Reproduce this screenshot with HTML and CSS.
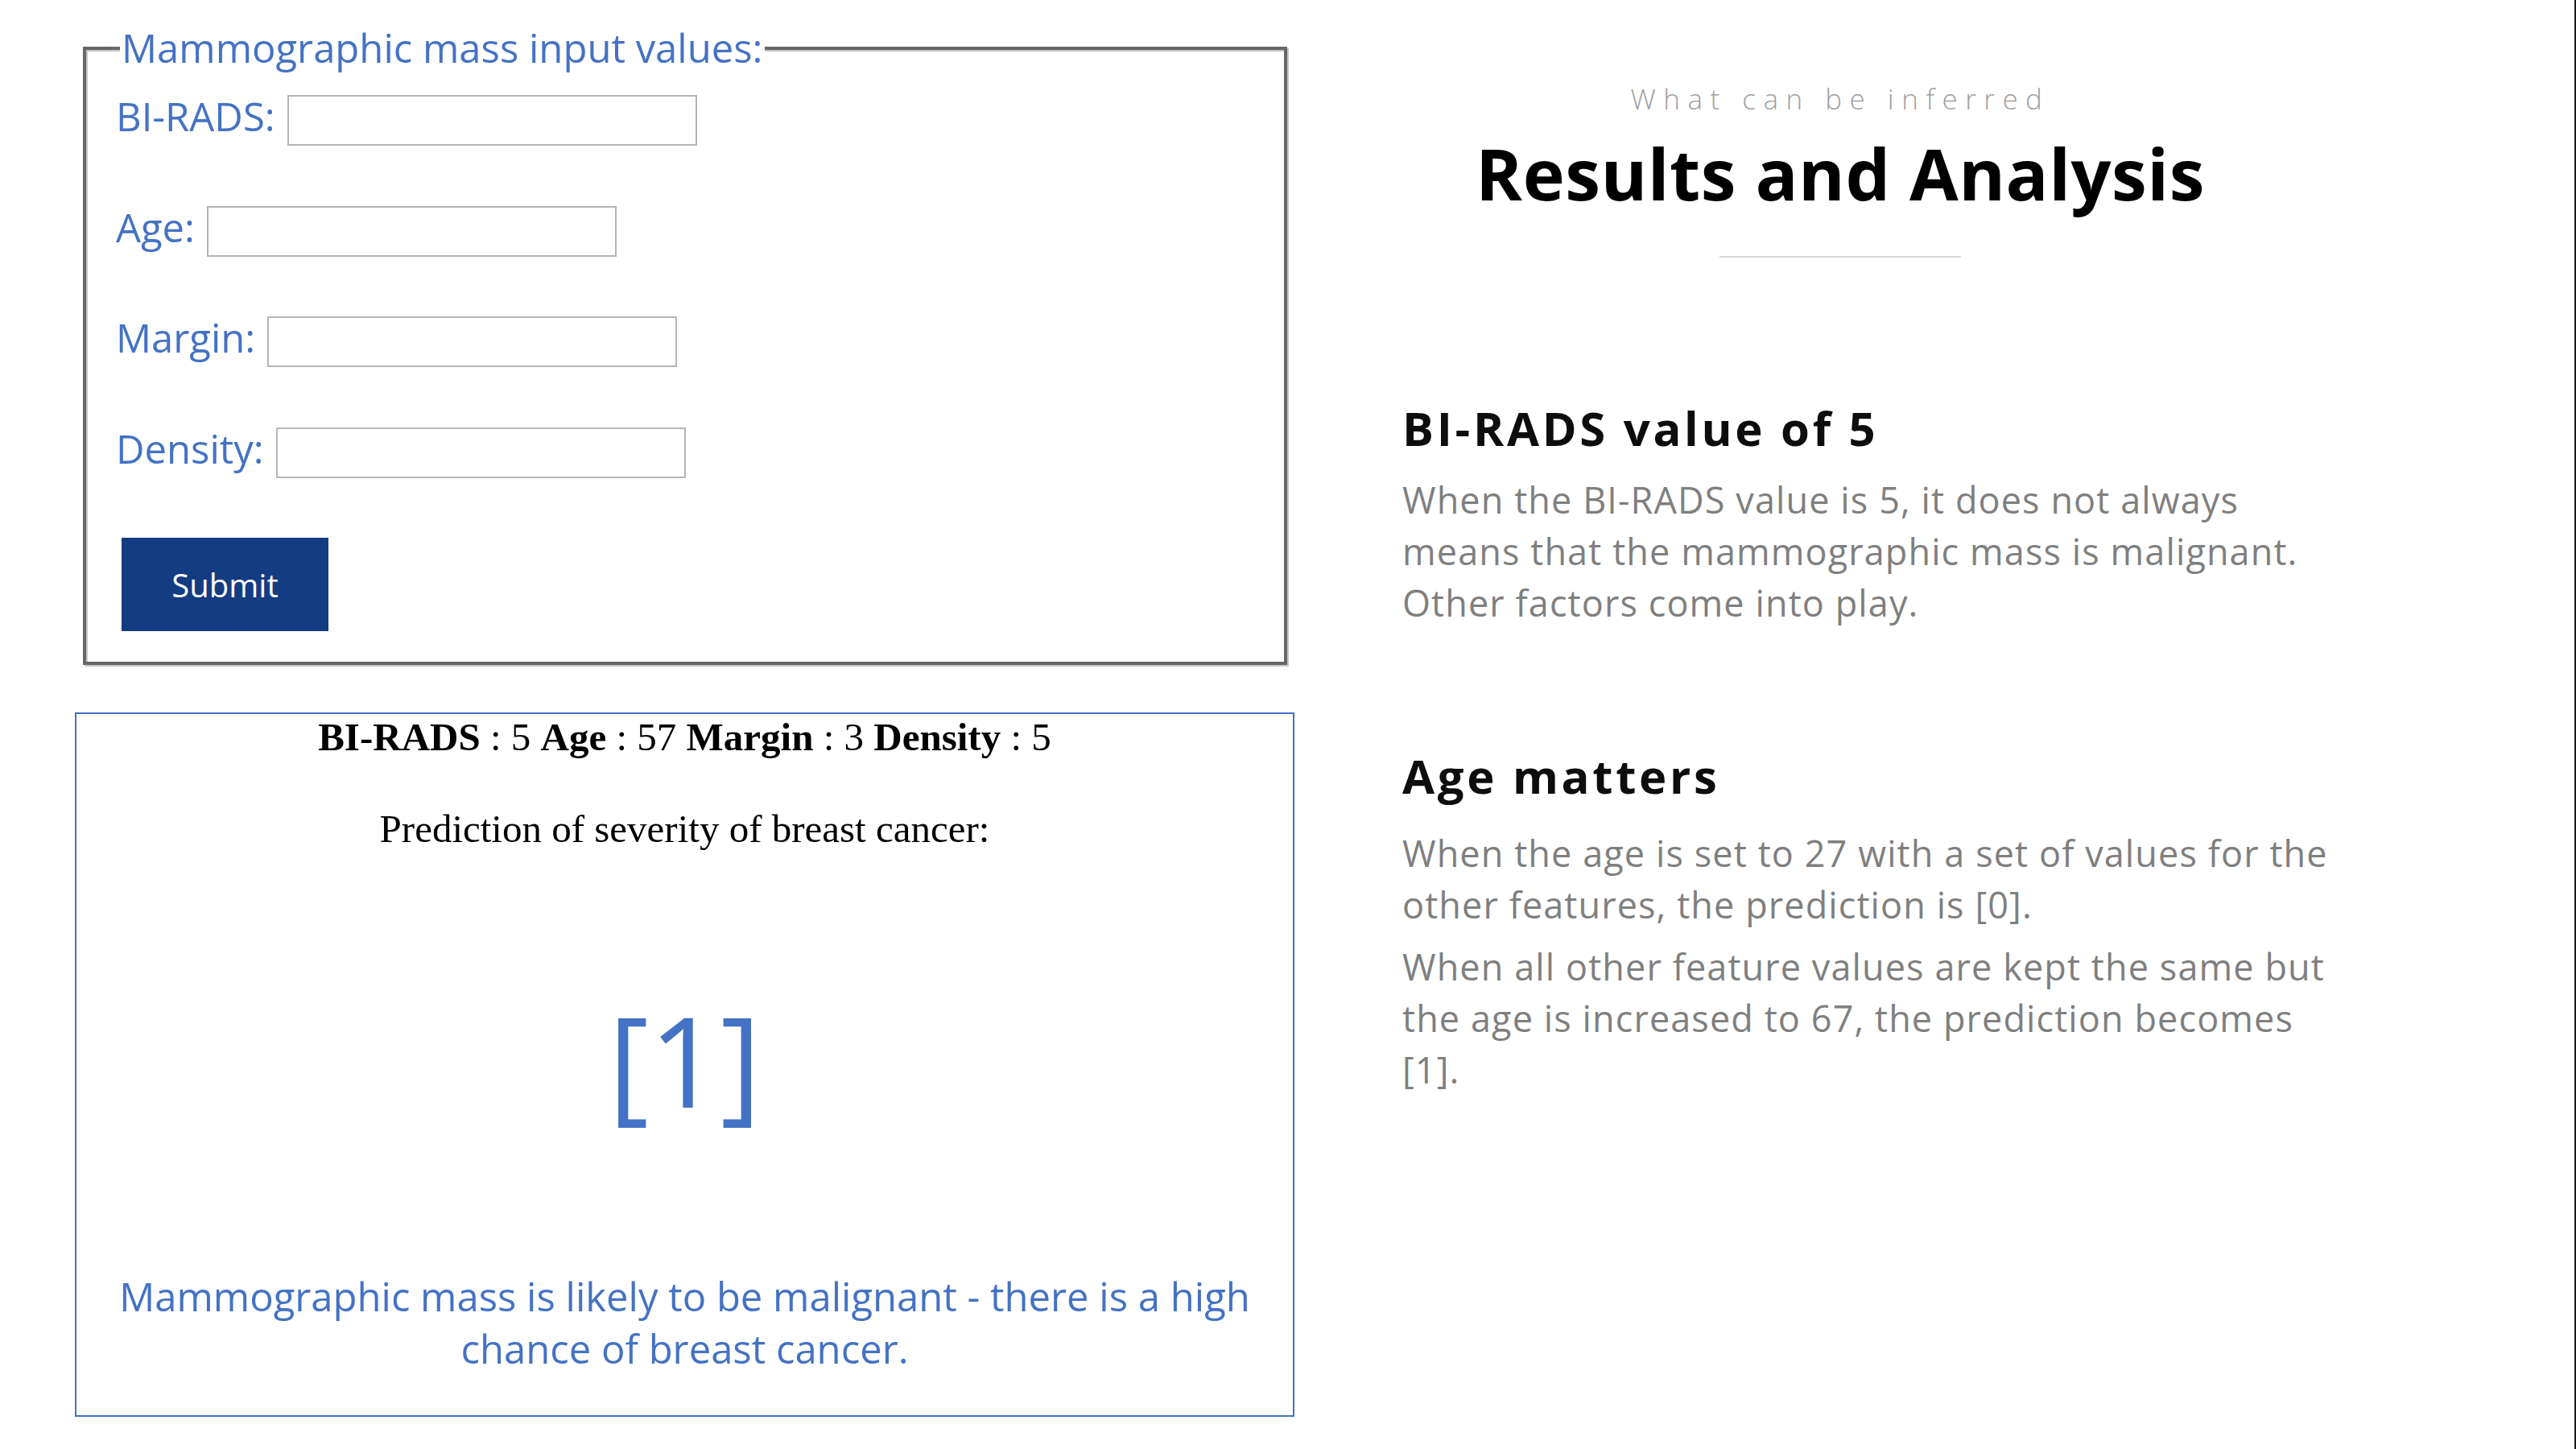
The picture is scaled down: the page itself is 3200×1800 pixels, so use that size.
FILE: index.html
```html
<!DOCTYPE html>
<html lang="en">
<head>
<meta charset="utf-8">
<title>Mammographic mass prediction - Results and Analysis</title>
<link rel="stylesheet" href="styles.css">
</head>
<body>
<div class="page">
  <div class="left">
    <form class="mass-form">
      <fieldset class="mass-fieldset">
        <legend>Mammographic mass input values:</legend>
        <div class="field"><label for="birads">BI-RADS:</label><input id="birads" type="text"></div>
        <div class="field"><label for="age">Age:</label><input id="age" type="text"></div>
        <div class="field"><label for="margin">Margin:</label><input id="margin" type="text"></div>
        <div class="field"><label for="density">Density:</label><input id="density" type="text"></div>
        <div class="actions"><button type="button" class="submit">Submit</button></div>
      </fieldset>
    </form>
    <div class="result">
      <p class="summary"><b>BI-RADS</b> : 5 <b>Age</b> : 57 <b>Margin</b> : 3 <b>Density</b> : 5</p>
      <p class="pred-label">Prediction of severity of breast cancer:</p>
      <p class="pred-value">[1]</p>
      <p class="pred-message">Mammographic mass is likely to be malignant - there is a high chance of breast cancer.</p>
    </div>
  </div>
  <div class="right">
    <header class="analysis-head">
      <p class="eyebrow">What can be inferred</p>
      <h1 class="title">Results and Analysis</h1>
      <div class="divider"></div>
    </header>
    <section class="finding finding-first">
      <h2>BI-RADS value of 5</h2>
      <p>When the BI-RADS value is 5, it does not always means that the mammographic mass is malignant. Other factors come into play.</p>
    </section>
    <section class="finding finding-second">
      <h2>Age matters</h2>
      <p>When the age is set to 27 with a set of values for the other features, the prediction is [0].</p>
      <p>When all other feature values are kept the same but the age is increased to 67, the prediction becomes [1].</p>
    </section>
  </div>
</div>
</body>
</html>
```

FILE: styles.css
```css
html, body {
  margin: 0;
  padding: 0;
  background: #ffffff;
}

.page {
  width: 3200px;
  height: 1800px;
  box-sizing: border-box;
  border-right: 2px solid #1a1a1a;
  display: flex;
  overflow: hidden;
}

/* ---------- left column ---------- */
.left {
  width: 1515px;
  margin-left: 93px;
  flex-shrink: 0;
  display: flex;
  flex-direction: column;
}

.mass-form {
  margin: 0;
}

.mass-fieldset {
  margin: 32px 0 0 10px;
  width: 1496px;
  min-width: 0;
  box-sizing: border-box;
  border: 4px solid #676767;
  box-shadow: 2px 2px 0 #c6c6c6, inset 2px 2px 0 #c6c6c6;
  padding: 31px 20px 38px 37px;
}

.mass-fieldset legend {
  margin-left: 5px;
  font: 400 49px/55px "Open Sans", sans-serif;
  color: #4472c4;
  padding: 0 2px;
  background: #ffffff;
}

.field {
  display: flex;
  align-items: flex-start;
  gap: 15px;
  margin-bottom: 74.5px;
}

.field label {
  font: 400 49px/53px "Open Sans", sans-serif;
  color: #4472c4;
}

.field input {
  width: 509px;
  height: 63px;
  box-sizing: border-box;
  margin: 0;
  padding: 0 10px;
  border: 2px solid #b5b5b5;
  background: #ffffff;
  font: 30px "Open Sans", sans-serif;
  outline: none;
}

.actions {
  display: flex;
  padding-left: 7px;
}

.submit {
  width: 257px;
  height: 116px;
  margin: 0;
  padding: 0;
  border: 0;
  background: #143c82;
  color: #ffffff;
  font: 400 40px "Open Sans", sans-serif;
}

.result {
  margin-top: 59px;
  width: 1515px;
  box-sizing: border-box;
  border: 2px solid #4472c4;
  padding: 1px 20px 50px;
  text-align: center;
}

.result p {
  margin: 0;
}

.summary,
.pred-label {
  font: 400 49px/56px "Liberation Serif", "Times New Roman", serif;
  color: #000000;
}

.summary b {
  font-weight: 700;
}

.result .pred-label {
  margin-top: 58px;
}

.result .pred-value {
  margin-top: 180px;
  font: 400 155px/155px "Open Sans", sans-serif;
  color: #4472c4;
}

.result .pred-message {
  margin-top: 185px;
  font: 400 49px/65px "Open Sans", sans-serif;
  color: #4472c4;
}

/* ---------- right column ---------- */
.right {
  margin-left: 131px;
  width: 1170px;
  padding-top: 100px;
  flex-shrink: 0;
}

.analysis-head {
  width: 1094px;
  text-align: center;
}

.eyebrow {
  margin: 0;
  font: 300 35px/46px "Open Sans", sans-serif;
  letter-spacing: 9.5px;
  color: #a0a0a0;
}

.title {
  margin: 19px 0 0;
  font: 700 88px/100px "Open Sans", sans-serif;
  letter-spacing: 0.5px;
  color: #000000;
}

.divider {
  width: 300px;
  height: 2px;
  margin: 53px auto 0;
  background: #d6d6d6;
}

.finding {
  margin-top: 148px;
  padding-left: 3px;
}

.finding-first {
  margin-top: 177px;
}

.finding h2 {
  margin: 0 0 22px;
  font: 700 58px/70px "Open Sans", sans-serif;
  letter-spacing: 3.7px;
  color: #0d0d0d;
}

.finding-second h2 {
  margin-bottom: 29px;
}

.finding p {
  margin: 0;
  font: 400 45px/64px "Open Sans", sans-serif;
  letter-spacing: 1.1px;
  color: #7f7f7f;
}

.finding p + p {
  margin-top: 13px;
}
```
